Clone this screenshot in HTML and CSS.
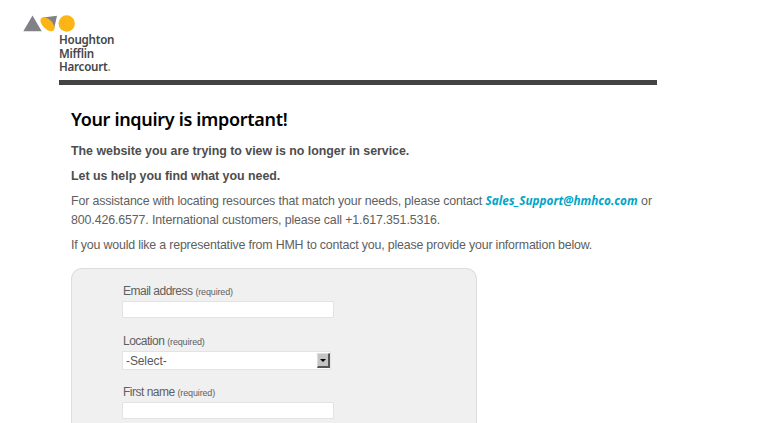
FILE: index.html
```html
<!DOCTYPE html>
<html lang="en">
<head>
    <meta charset="UTF-8">
    <meta name="viewport" content="width=device-width, initial-scale=1.0">
    <title>Houghton Mifflin Harcourt</title>
    <link rel="stylesheet" href="styles.css">
</head>
<body>
    <header class="header">
        <svg class="logo" width="53" height="18" viewBox="0 0 53 18">
            <path d="M.3 16.2 L9.5 .6 L18.7 16.2 Z" fill="#808285"/>
            <path d="M20 2.6 L34 .8 L30.8 15 Z" fill="#808285"/>
            <ellipse cx="24.5" cy="9.2" rx="8.7" ry="4.8" transform="rotate(45 24.5 9.2)" fill="#fdb515"/>
            <circle cx="43.7" cy="8.5" r="8.2" fill="#fdb515"/>
        </svg>
        <div class="brand">
            <div>Houghton</div>
            <div>Mifflin</div>
            <div>Harcourt<span class="dot">.</span></div>
        </div>
    </header>

    <main class="content">
        <h1>Your inquiry is important!</h1>
        <p class="strong">The website you are trying to view is no longer in service.</p>
        <p class="strong">Let us help you find what you need.</p>
        <p><span class="contact">For assistance with locating resources that match your needs, please contact</span> <a href="mailto:Sales_Support@hmhco.com">Sales_Support@hmhco.com</a> or<br><span class="phone">800.426.6577. International customers, please call +1.617.351.5316.</span></p>
        <p class="rep">If you would like a representative from HMH to contact you, please provide your information below.</p>

        <form class="form">
            <div class="field">
                <label for="email">Email address <small>(required)</small></label>
                <input type="text" id="email">
            </div>
            <div class="field">
                <label for="location">Location <small>(required)</small></label>
                <div class="select">
                    <select id="location">
                        <option>-Select-</option>
                    </select>
                    <span class="arrow"></span>
                </div>
            </div>
            <div class="field">
                <label for="first">First name <small>(required)</small></label>
                <input type="text" id="first">
            </div>
        </form>
    </main>
</body>
</html>
```

FILE: styles.css
```css
* {
    box-sizing: border-box;
}
body {
    margin: 0;
    height: 423px;
    overflow: hidden;
    background: #fff;
    color: #606060;
    font-family: "Liberation Sans", Arial, sans-serif;
    font-size: 12.4px;
    line-height: 18.5px;
}
.header {
    width: 634px;
    height: 85px;
    margin-left: 23px;
    padding-top: 15px;
}
.logo {
    display: block;
}
.brand {
    height: 52px;
    margin-left: 36px;
    border-bottom: 5px solid #434343;
    color: #454648;
    font: 600 11.6px/13.7px "Noto Sans", sans-serif;
    letter-spacing: -0.25px;
}
.dot {
    color: #999;
}
.content {
    width: 610px;
    margin-left: 71px;
}
h1 {
    margin: 0;
    padding-top: 21px;
    color: #000;
    font: 600 18px/26px "Noto Sans", sans-serif;
    letter-spacing: -0.32px;
}
p {
    margin: 0 0 6.5px;
}
.strong {
    color: #4d4d4d;
    font-weight: bold;
    letter-spacing: -0.02px;
}
h1 + .strong {
    margin-top: 10px;
}
.contact {
    letter-spacing: -0.155px;
}
.phone {
    letter-spacing: -0.12px;
}
.rep {
    letter-spacing: -0.185px;
}
a {
    color: #00a5c8;
    font: italic bold 11.8px/16px "Noto Sans", sans-serif;
    text-decoration: none;
}
.form {
    width: 406px;
    height: 155px;
    margin-top: 14px;
    padding: 13px 0 0 50px;
    border: 1px solid #dedede;
    border-bottom: 0;
    border-radius: 11px 11px 0 0;
    background: #f0f0f0;
}
.field {
    height: 50px;
}
.field + .field {
    height: 51px;
}
label {
    display: block;
    height: 19px;
    padding-left: 1px;
    font-size: 12px;
    letter-spacing: -0.5px;
}
small {
    font-size: 9px;
    letter-spacing: -0.15px;
}
input {
    display: block;
    width: 212px;
    height: 17px;
    border: 1px solid #e3e3e3;
    border-radius: 2px;
    background: #fff;
}
.select {
    display: flex;
    width: 209px;
    height: 19px;
    border: 1px solid #e3e3e3;
    background: #fff;
}
select {
    flex: 1;
    padding: 0 3px;
    border: 0;
    background: #fff;
    appearance: none;
    color: #58595b;
    font: 12px "Liberation Sans", Arial, sans-serif;
    letter-spacing: -0.1px;
}
.arrow {
    display: flex;
    width: 13px;
    height: 15px;
    margin: 1px 0 1px 1px;
    border: 1px solid #ddd;
    border-right: 2px solid #555;
    border-bottom: 2px solid #555;
    background: #c4c4c4;
    align-items: center;
    justify-content: center;
}
.arrow::before {
    content: "";
    border: 3px solid transparent;
    border-top-color: #000;
    border-bottom: 0;
}
```
